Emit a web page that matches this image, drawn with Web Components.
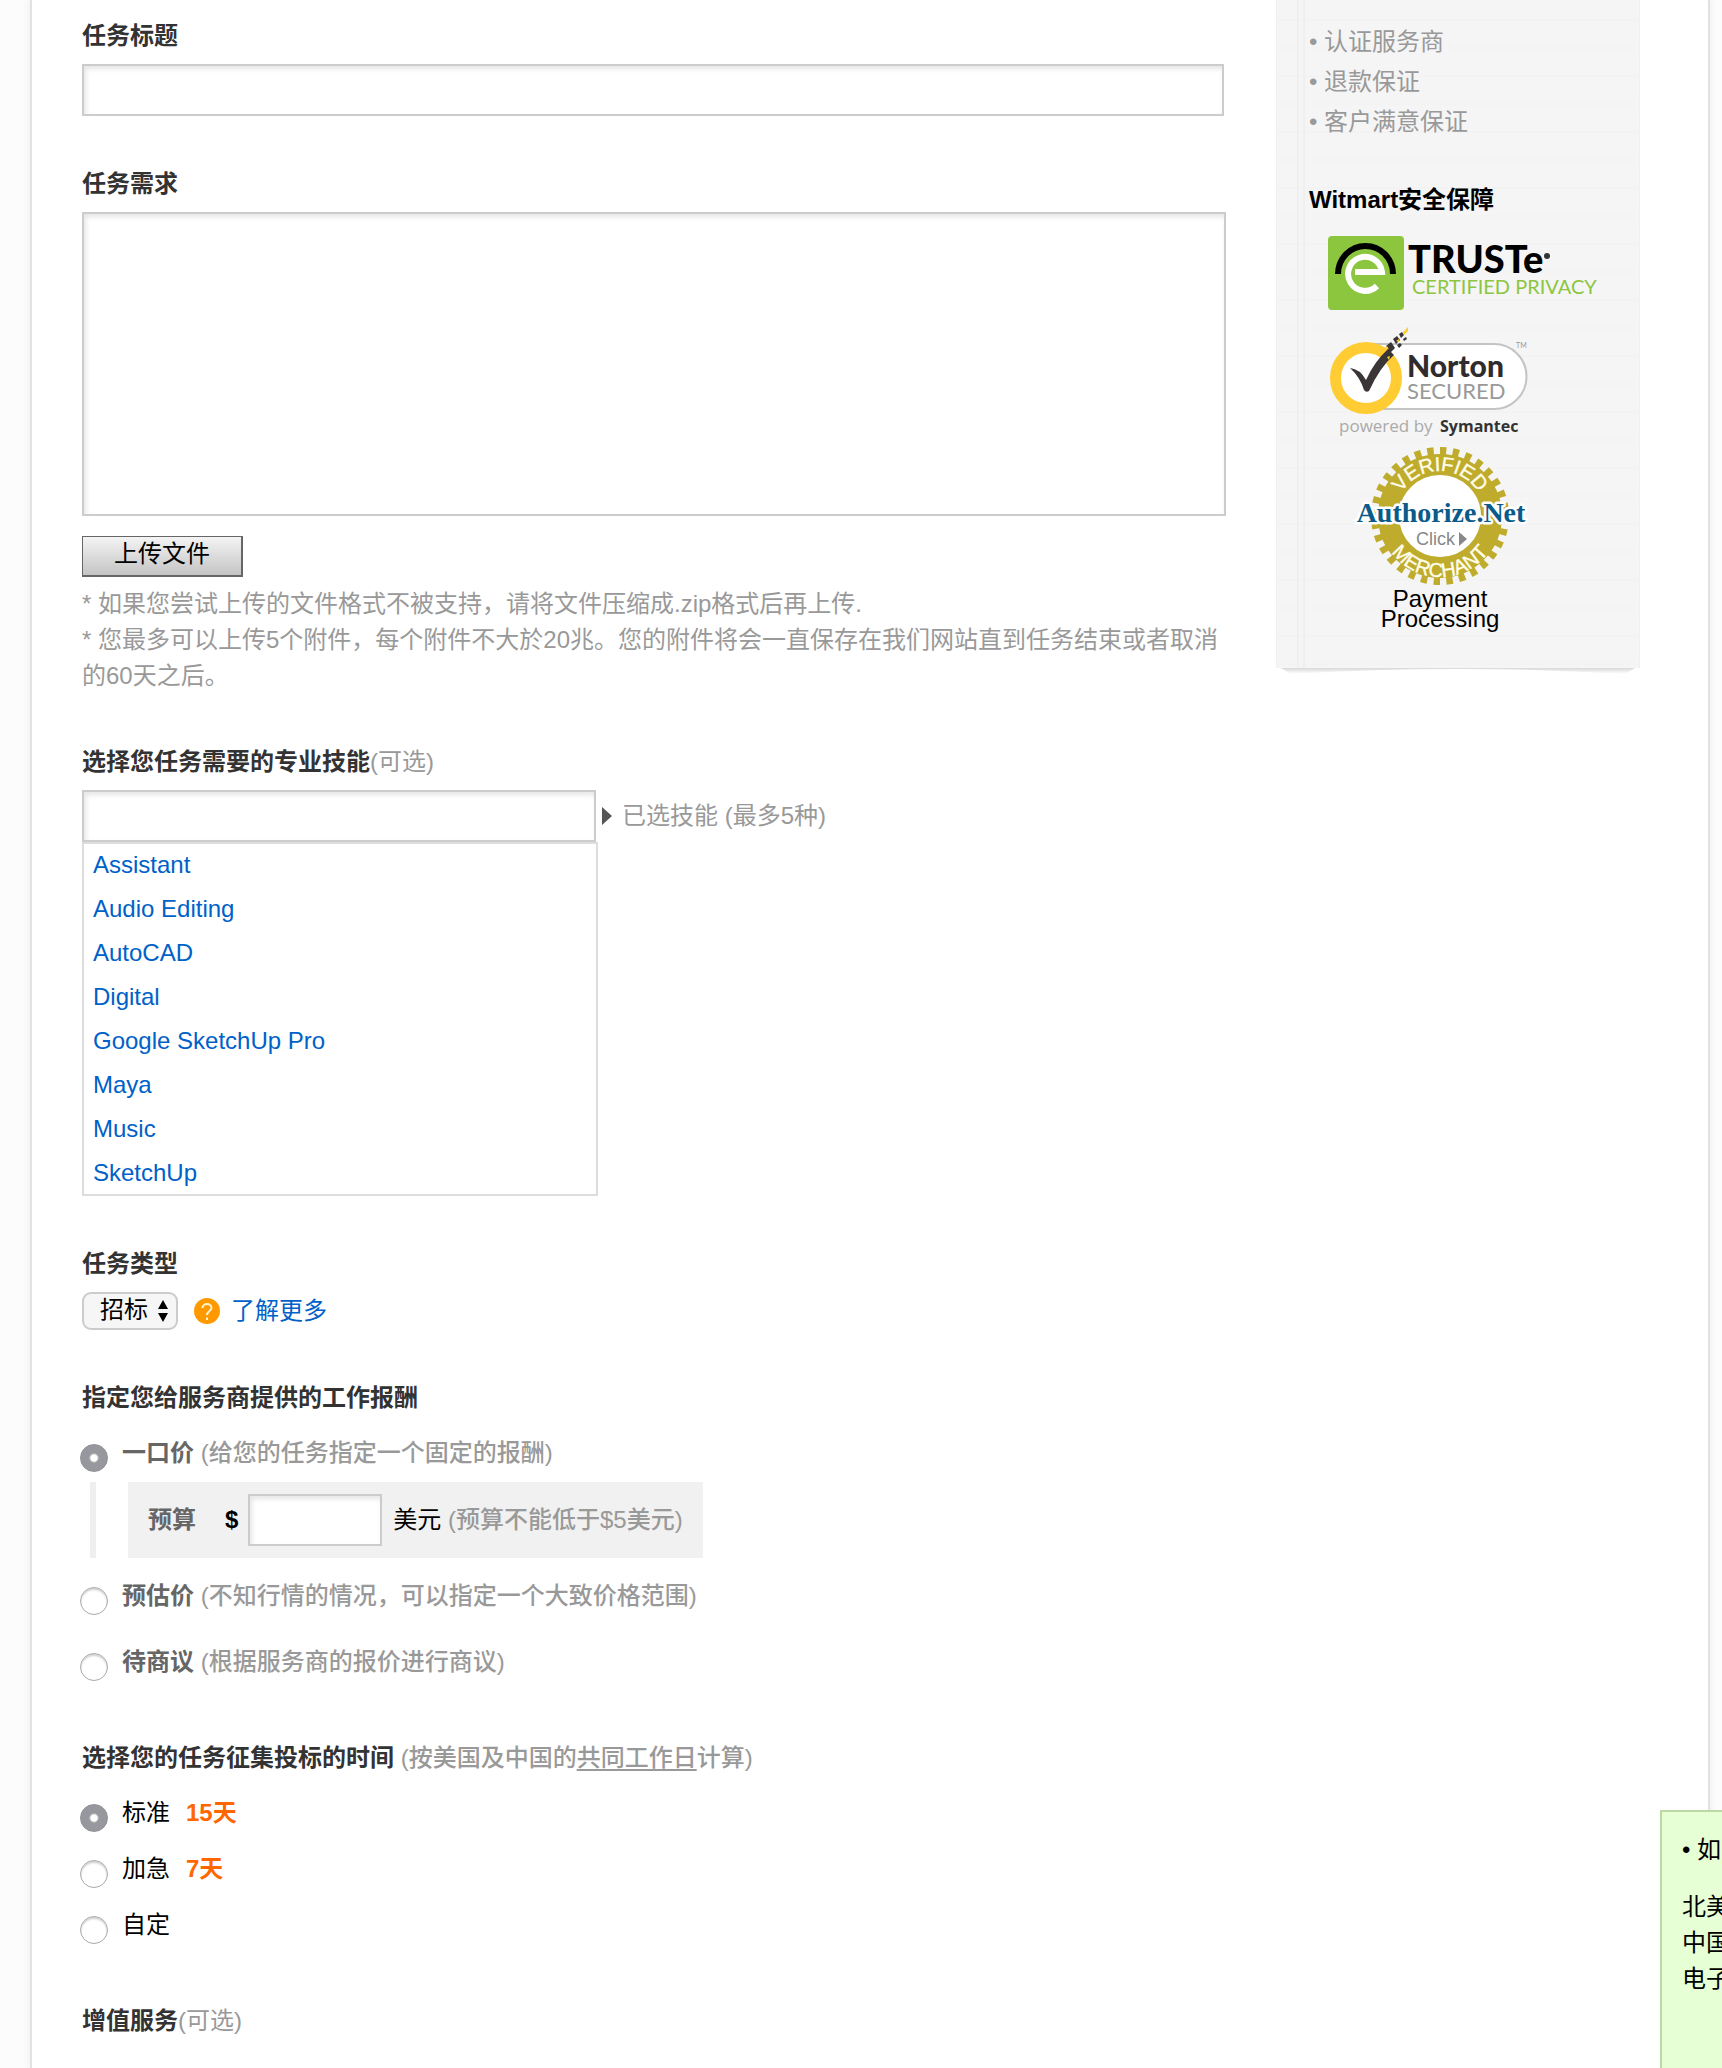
<!DOCTYPE html>
<html lang="zh-CN">
<head>
<meta charset="utf-8">
<title>Witmart - 发布任务</title>
<style>
  html { background: #fcfcfc; }
  body {
    margin: 0;
    font: 24px/36px "Liberation Sans", "Noto Sans CJK SC", sans-serif;
    color: #000;
    overflow-x: hidden;
  }
</style>
</head>
<body>
<task-page>
  <task-form slot="main"></task-form>
  <trust-sidebar slot="side"></trust-sidebar>
  <help-note slot="note"></help-note>
</task-page>

<script>
const base = `
  *, *::before, *::after { box-sizing: border-box; }
  :host { display: block; box-sizing: border-box; }
  ul, p, h2, h3 { margin: 0; padding: 0; }
  ul { list-style: none; }
  a { color: #0061c8; text-decoration: none; }
  input, textarea, select, button { font: inherit; color: inherit; margin: 0; }
  .box {
    display: block; width: 100%; height: 52px; padding: 0 12px;
    border: 2px solid #ccc; border-radius: 0; background: #fff;
    box-shadow: inset 2px 3px 5px rgba(0,0,0,.1); outline: 0; resize: none;
  }
  .note { color: #999; font-weight: 400; }
`;

function define(name, html, css = '') {
  customElements.define(name, class extends HTMLElement {
    constructor() {
      super();
      this.attachShadow({ mode: 'open' }).innerHTML = `<style>${base}${css}</style>${html}`;
    }
  });
}

/* Page frame: white sheet with hairline sides */
define('task-page', `
  <div class="sheet">
    <main><slot name="main"></slot></main>
    <aside><slot name="side"></slot></aside>
  </div>
  <slot name="note"></slot>
`, `
  :host { position: relative; overflow: hidden; height: 100vh; padding: 0 12px 0 30px; }
  .sheet {
    display: flex; align-items: flex-start; gap: 50px; min-height: 100%;
    padding: 0 68px 0 50px; background: #fff;
    border: solid #e2e2e2; border-width: 0 2px;
    box-shadow: 0 0 8px rgba(0,0,0,.07);
  }
  main { flex: 1; min-width: 0; }
  aside { flex: 0 0 364px; }
`);

/* Titled block of the form */
define('form-section', `
  <slot name="title"></slot>
  <slot></slot>
`, `
  :host { display: flex; flex-direction: column; gap: 10px; }
  ::slotted([slot=title]) { color: #333; font-weight: 700; }
`);

define('task-form', `
  <form>
    <form-section>
      <label slot="title" for="title">任务标题</label>
      <div class="narrow"><input class="box" id="title" type="text"></div>
    </form-section>

    <form-section>
      <label slot="title" for="need">任务需求</label>
      <textarea class="box tall" id="need"></textarea>
      <div class="upload">
        <button type="button">上传文件</button>
        <p class="note">* 如果您尝试上传的文件格式不被支持，请将文件压缩成.zip格式后再上传.</p>
        <p class="note">* 您最多可以上传5个附件，每个附件不大於20兆。您的附件将会一直保存在我们网站直到任务结束或者取消的60天之后。</p>
      </div>
    </form-section>

    <form-section>
      <label slot="title" for="skill">选择您任务需要的专业技能<span class="note">(可选)</span></label>
      <div class="skills">
        <div class="row">
          <input class="box pick" id="skill" type="text">
          <svg width="10" height="18" viewBox="0 0 10 18"><path d="M0 0L10 9L0 18Z" fill="#555"/></svg>
          <span class="note">已选技能 (最多5种)</span>
        </div>
        <ul>
          <li><a href="#">Assistant</a></li>
          <li><a href="#">Audio Editing</a></li>
          <li><a href="#">AutoCAD</a></li>
          <li><a href="#">Digital</a></li>
          <li><a href="#">Google SketchUp Pro</a></li>
          <li><a href="#">Maya</a></li>
          <li><a href="#">Music</a></li>
          <li><a href="#">SketchUp</a></li>
        </ul>
      </div>
    </form-section>

    <form-section>
      <label slot="title" for="type">任务类型</label>
      <div class="row type">
        <span class="drop">
          <select id="type"><option>招标</option></select>
          <svg width="12" height="22" viewBox="0 0 12 22"><path d="M6 0L11 9H1ZM6 22L1 13H11Z"/></svg>
        </span>
        <a href="#" class="more">
          <svg width="26" height="26" viewBox="0 0 26 26"><circle cx="13" cy="13" r="13" fill="#f90"/><path d="M8.500 10C8.500 4.500 17.500 4.500 17.500 10C17.500 13 13 13 13 17M13 19.500V22" fill="none" stroke="#fff3d0" stroke-width="2"/></svg>
          <span>了解更多</span>
        </a>
      </div>
    </form-section>

    <form-section>
      <h3 slot="title">指定您给服务商提供的工作报酬</h3>
      <pay-options></pay-options>
    </form-section>

    <form-section>
      <h3 slot="title">选择您的任务征集投标的时间 <span class="note mid">(按美国及中国的<u>共同工作日</u>计算)</span></h3>
      <time-options></time-options>
    </form-section>

    <form-section>
      <h3 slot="title">增值服务<span class="note">(可选)</span></h3>
    </form-section>
  </form>
`, `
  form { display: flex; flex-direction: column; gap: 50px; padding-top: 18px; }
  h3 { font-size: 24px; }
  u { text-underline-offset: 3px; text-decoration-thickness: 2px; }
  .mid { font-weight: 500; }
  .narrow { padding-right: 2px; }
  .tall { height: 304px; }
  .upload { padding-top: 10px; }
  button {
    display: block; width: 161px; height: 41px; margin-bottom: 9px; padding: 0 0 4px; line-height: 34px;
    border: solid #666; border-width: 1px 2px 2px 1px; border-radius: 0;
    background: linear-gradient(#f4f4f4, #c4c4c4); color: #000;
  }
  .row { display: flex; align-items: center; }
  .pick { width: 514px; margin-right: 6px; }
  .row > .note { margin-left: 10px; }
  ul {
    display: flex; flex-direction: column; gap: 8px; width: 516px;
    padding: 3px 9px; border: 2px solid #ddd;
  }
  .type { gap: 16px; }
  .drop { display: grid; width: 96px; align-items: center; }
  .drop > * { grid-area: 1 / 1; }
  .drop svg { justify-self: end; margin-right: 9px; pointer-events: none; }
  select {
    appearance: none; height: 38px; width: 100%; padding: 0 16px 2px; line-height: 32px;
    border: 2px solid #ccc; border-radius: 9px; background: #f6f6f6;
  }
  .more { display: flex; align-items: center; gap: 11px; }
`);

const radioCss = `
  .opt { display: flex; align-items: flex-start; gap: 14px; margin-left: -2px; }
  .opt input {
    appearance: none; flex: none; width: 28px; height: 28px; margin-top: 9px;
    border: 1px solid #aaa; border-radius: 50%; background: #fff;
    box-shadow: inset 0 2px 2px rgba(0,0,0,.18);
  }
  .opt input:checked {
    border-color: #8f8f95; box-shadow: none;
    background: radial-gradient(circle, #fff 3px, #97979e 5px);
  }
  b { color: #666; }
  .note { font-weight: 500; }
`;

define('pay-options', `
  <div class="opt"><input type="radio" name="pay" id="fixed" checked><label for="fixed"><b>一口价</b> <span class="note">(给您的任务指定一个固定的报酬)</span></label></div>
  <div class="budget">
    <i></i>
    <div class="panel">
      <label for="amount">预算</label>
      <strong>$</strong>
      <input class="box" id="amount" type="text">
      <span>美元 <span class="note">(预算不能低于$5美元)</span></span>
    </div>
  </div>
  <div class="opt"><input type="radio" name="pay" id="range"><label for="range"><b>预估价</b> <span class="note">(不知行情的情况，可以指定一个大致价格范围)</span></label></div>
  <div class="opt last"><input type="radio" name="pay" id="talk"><label for="talk"><b>待商议</b> <span class="note">(根据服务商的报价进行商议)</span></label></div>
`, radioCss + `
  :host { padding: 9px 0; }
  .budget { display: flex; gap: 32px; margin: 10px 0 20px 8px; }
  .budget i { width: 6px; background: #efefef; }
  .panel { display: flex; align-items: center; height: 76px; padding: 0 20px; background: #f1f1f1; }
  .panel label { color: #666; font-weight: 700; margin-right: 29px; }
  .panel .box { width: 134px; margin: 0 11px 0 10px; }
  .last { margin-top: 29px; }
`);

define('time-options', `
  <div class="opt"><input type="radio" name="time" id="std" checked><label for="std">标准<em>15天</em></label></div>
  <div class="opt"><input type="radio" name="time" id="fast"><label for="fast">加急<em>7天</em></label></div>
  <div class="opt"><input type="radio" name="time" id="own"><label for="own">自定</label></div>
`, radioCss + `
  :host { display: flex; flex-direction: column; gap: 19px; padding: 9px 0; }
  em { margin-left: 16px; font-style: normal; font-weight: 700; color: #f60; }
`);

define('trust-sidebar', `
  <ul>
    <li>• 认证服务商</li>
    <li>• 退款保证</li>
    <li>• 客户满意保证</li>
  </ul>
  <h3>Witmart安全保障</h3>
  <seal-truste></seal-truste>
  <seal-norton></seal-norton>
  <seal-authorize></seal-authorize>
  <svg class="curl" viewBox="0 0 364 10" preserveAspectRatio="none">
    <defs><linearGradient id="g" x2="0" y2="1"><stop stop-color="#d8d8d8"/><stop offset="1" stop-color="#fff"/></linearGradient></defs>
    <path d="M4 0H360L350 6Q182 -4 14 6Z" fill="url(#g)"/>
  </svg>
`, `
  :host {
    position: relative; padding: 22px 0 39px 32px;
    background:
      linear-gradient(90deg, transparent 20px, #efefef 20px 22px, transparent 22px 26px, #efefef 26px 28px, transparent 28px),
      repeating-linear-gradient(#f5f5f5 0 19px, #f3f3f3 19px 21px, #f5f5f5 21px 28px);
    border: solid #f0f0f0; border-width: 0 1px;
  }
  li { line-height: 40px; color: #999; }
  h3 { margin: 40px 0 18px; font-size: 24px; }
  .curl { position: absolute; left: 0; top: 100%; width: 100%; height: 10px; }
`);

define('seal-truste', `
  <svg width="280" height="76" viewBox="0 0 280 76">
    <rect x="0" y="0" width="76" height="74" rx="4" fill="#8cc63f"/>
    <path d="M10 38A27.500 28 0 0 1 65 38" fill="none" stroke="#000" stroke-width="6"/>
    <path d="M27 36H54A17 17 0 1 0 49 50" fill="none" stroke="#fff" stroke-width="6"/>
    <text x="80" y="37" font-size="38" font-weight="900">TRUSTe</text>
    <circle cx="219" cy="20" r="3" fill="#333"/>
    <text x="84" y="58" font-size="20" fill="#8cc63f">CERTIFIED PRIVACY</text>
  </svg>
`, `
  :host { padding-left: 19px; }
  svg { display: block; font-family: Lato, sans-serif; }
`);

define('seal-norton', `
  <svg width="210" height="112" viewBox="0 0 210 112">
    <path d="M38 20H166A32.500 32.500 0 0 1 166 85H38Z" fill="#fff" stroke="#c4c4c4" stroke-width="2"/>
    <circle cx="38" cy="54" r="30.500" fill="#fff" stroke="#fc3" stroke-width="11"/>
    <path d="M22 44Q32 45 38 56Q46 38 60 25L66 31Q52 43 41 67Q38 69 36 66Q32 53 22 44Z" fill="#3a3536"/>
    <path d="M58 22l5 -4 4 6 -5 5zM65 15l4 -3 3 4 -4 4zM71 10l3 -2 2 3 -3 3zM69 21l3 -2 2 2 -3 3zM75 15l3 -2 1 2 -3 2z" fill="#3a3536"/>
    <path d="M75 8l5 -5v4l-4 4zM59 33l3 -1 -1 4zM57 24l2 -2 2 3zM68 17l3 -2 0 3z" fill="#fc3"/>
    <text x="79" y="53" font-size="30" font-weight="900" fill="#302c2d">Norton</text>
    <text x="79" y="75" font-size="22" fill="#999">SECURED</text>
    <text x="188" y="24" font-size="7" fill="#999">TM</text>
    <g font-family="Open Sans, sans-serif">
      <text x="11" y="108" font-size="17" fill="#aaa">powered by</text>
      <text x="112" y="108" font-size="16" font-weight="700" fill="#333">Symantec</text>
    </g>
  </svg>
`, `
  :host { padding: 12px 0 9px 19px; }
  svg { display: block; font-family: Lato, sans-serif; }
`);

define('seal-authorize', `
  <svg width="180" height="144" viewBox="0 0 180 144">
    <defs>
      <path id="up" d="M45 71A45 45 0 0 1 135 71"/>
      <path id="down" d="M30 72A60 60 0 0 0 150 72"/>
    </defs>
    <circle cx="90" cy="71" r="51.500" fill="#fff" stroke="#bfab2c" stroke-width="21"/>
    <circle cx="90" cy="71" r="65" fill="none" stroke="#bfab2c" stroke-width="8" pathLength="64" stroke-dasharray="1 1"/>
    <g fill="#fffde8" stroke="#fffde8" stroke-width="0.400" font-size="20" text-anchor="middle">
      <text><textPath href="#up" startOffset="50%">VERIFIED</textPath></text>
      <text><textPath href="#down" startOffset="50%">MERCHANT</textPath></text>
    </g>
    <text x="91" y="77" text-anchor="middle" font-family="Liberation Serif, serif" font-size="28" font-weight="700" fill="#0a5a8a" stroke="#fff" stroke-width="5" stroke-linejoin="round" paint-order="stroke">Authorize.Net</text>
    <text x="66" y="100" font-size="18" fill="#888">Click</text>
    <path d="M109 87L117 94L109 101Z" fill="#888"/>
  </svg>
  <a href="#">Payment<br>Processing</a>
`, `
  :host { display: flex; flex-direction: column; width: 180px; margin-left: 41px; }
  svg { display: block; }
  a { color: #000; text-align: center; line-height: 20px; }
`);

/* Help balloon that runs past the right edge of the window */
define('help-note', `
  <p class="lead">• 如</p>
  <p>北美</p>
  <p>中国</p>
  <p>电子</p>
`, `
  :host {
    position: absolute; right: -338px; bottom: -40px; width: 400px; height: 298px;
    padding: 20px; border: 2px solid #bbd9a1; background: #e6ffd5;
  }
  .lead { margin-bottom: 21px; }
`);
</script>
</body>
</html>
